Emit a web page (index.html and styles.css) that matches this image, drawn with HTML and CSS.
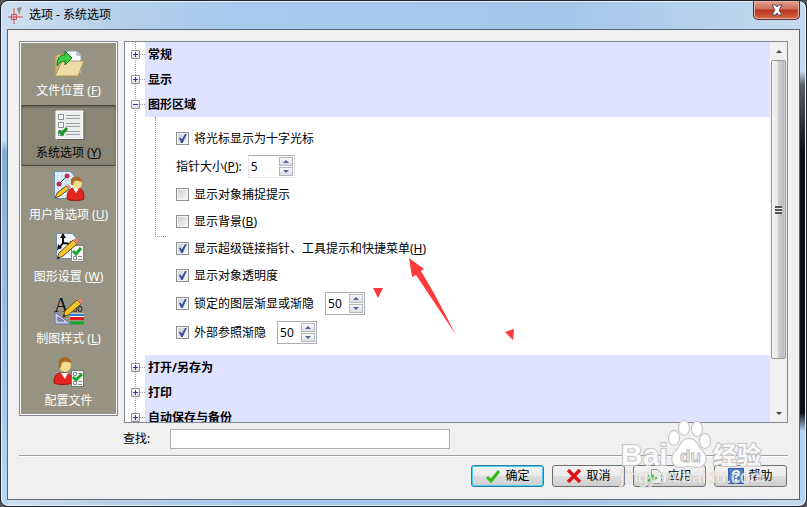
FILE: index.html
```
<!DOCTYPE html>
<html lang="zh-CN">
<head>
  <meta charset="UTF-8" />
  <title>选项 - 系统选项</title>
  <link rel="stylesheet" href="styles.css">
</head>
<body>
  <div class="window">
    <header class="titlebar">
      <svg class="app-icon" width="16" height="18" viewBox="0 0 16 18">
        <circle cx="9" cy="8" r="7" fill="#d9dde2"/>
        <path d="M9 2l5-1-3 8z" fill="#8c8f94"/>
        <path d="M6 2v16M0 11h15M3.500 8.500h5v5h-5z" stroke="#c8505a" fill="none"/>
      </svg>
      <h1>选项 - 系统选项</h1>
      <button class="close" aria-label="关闭">
        <svg width="14" height="12" viewBox="0 0 14 12">
          <path d="M2 1h3.500L7 3l1.500-2H12L9 6l3 5H8.500L7 9l-1.500 2H2l3-5z" fill="#fff" stroke="#5a4a55"/>
        </svg>
      </button>
    </header>

    <main class="client">
      <div class="panes">
        <nav class="sidebar">
          <button>
            <svg width="32" height="30" viewBox="0 0 32 30">
              <path d="M2 8l3-2h6l2 2h14v20H2z" fill="#cdb67e" stroke="#a58d50"/>
              <path d="M14 3h10l4 4v18H14z" fill="#f8fbff" stroke="#8c9bb0"/>
              <path d="M24 3v4h4" fill="#c9d5e6" stroke="#8c9bb0"/>
              <path d="M2 28L9 13h22l-6 15z" fill="#ecdca6" stroke="#ad945a"/>
              <path d="M4 18c0-8 3-11 8-11V3l7 7-7 7v-4c-4 0-6 2-8 5z" fill="#3ccf45" stroke="#137c1c"/>
            </svg>
            <span>文件位置 (<u>F</u>)</span>
          </button>
          <button class="selected">
            <svg width="32" height="30" viewBox="0 0 32 30">
              <path d="M3 1h27v28H3z" fill="#eef0f0" stroke="#fff"/>
              <path d="M31 2v27.500H4" fill="none" stroke="#62665e"/>
              <path d="M5.500 4.500h5v5h-5zM5.500 12.500h5v5h-5zM5.500 20.500h5v5h-5z" fill="#fff" stroke="#8a8f92"/>
              <path d="M13 5.500h14M13 8.500h14M13 13.500h14M13 16.500h14M13 21.500h14M13 24.500h14" stroke="#9a9fa3"/>
              <path d="M6 21l3 3 5-6" fill="none" stroke="#169826" stroke-width="3"/>
            </svg>
            <span>系统选项 (<u>Y</u>)</span>
          </button>
          <button>
            <svg width="32" height="32" viewBox="0 0 32 32">
              <path d="M1.500 1.500h16l4 5v22h-20z" fill="#eaf6ff" stroke="#6c91b4"/>
              <path d="M5 2v26M9 2v26M13 2v26M17 2v26M2 6h18M2 10h18M2 14h18M2 18h18M2 22h18" stroke="#a9d3ea" stroke-width=".7"/>
              <path d="M6 14l8-8" stroke="#333"/>
              <circle cx="6" cy="14" r="2.500" fill="#b82d50"/>
              <circle cx="14" cy="6" r="2.500" fill="#b82d50"/>
              <path d="M2 28l2-5 9-7 3 3-9 7z" fill="#f4c62f" stroke="#6b4a12"/>
              <path d="M13 16l3 3 2-2-3-3z" fill="#ef8c8c"/>
              <path d="M14 29c0-9 3-11 9-11s8 3 8 11c-4 2-13 2-17 0z" fill="#e3241f" stroke="#9b1712"/>
              <path d="M20 18l3 5 3-5z" fill="#fff"/>
              <ellipse cx="24" cy="13" rx="5" ry="6" fill="#f1dc8e"/>
              <path d="M18 14c-1-6 2-8 6-7 4 0 5 2 5 5-4-1-7-2-8 0s-1 5-3 2z" fill="#a96a25"/>
            </svg>
            <span>用户首选项 (<u>U</u>)</span>
          </button>
          <button>
            <svg width="32" height="32" viewBox="0 0 32 32">
              <path d="M3.500 1.500h16l4 5v20h-20z" fill="#f0f5fb" stroke="#7690ad"/>
              <path d="M10 12V4M10 11l9 1M10 11l-4 5" stroke="#111" stroke-width="2" fill="none"/>
              <path d="M10 1l3 5H7zM22 12l-5-3v6zM4 18l1-6 4 4z" fill="#111"/>
              <path d="M18.500 13.500h12v16h-12z" fill="#f4f4f4" stroke="#82867e"/>
              <path d="M20.500 24.500h3v3h-3zM25 24.500h4M25 27.500h4" stroke="#8a8f92" fill="none"/>
              <path d="M20 19l3 3 5-6" stroke="#1aa42c" stroke-width="3" fill="none"/>
              <path d="M4 27l2-6L20 8l4 4-14 12z" fill="#f4c62f" stroke="#6b4a12"/>
              <path d="M4 27l1-3 2 2z" fill="#222"/>
              <path d="M20 8l4 4 2-3-3-3z" fill="#e77f7b"/>
            </svg>
            <span>图形设置 (<u>W</u>)</span>
          </button>
          <button>
            <svg width="32" height="30" viewBox="0 0 32 30">
              <text x="1" y="16" class="glyph-a">A</text>
              <text x="17" y="16" class="glyph-num">.00</text>
              <path d="M17 20h14" stroke="#fff" stroke-width="5"/>
              <path d="M17 19h14" stroke="#3478d6" stroke-width="2"/>
              <path d="M17 22.500h14" stroke="#e02020" stroke-width="3"/>
              <path d="M17 27h14" stroke="#13a42a" stroke-width="3"/>
              <path d="M2 16v12h16zM5 21l6 4H5z" fill="#c6c9e9" fill-rule="evenodd" stroke="#6d70a0"/>
              <path d="M10 21l2-6L24 4l4 4-13 11z" fill="#f4c62f" stroke="#6b4a12"/>
              <path d="M24 4l4 4 2-3-3-3z" fill="#e77f7b"/>
              <path d="M10 21l1-3 2 2z" fill="#222"/>
            </svg>
            <span>制图样式 (<u>L</u>)</span>
          </button>
          <button>
            <svg width="32" height="32" viewBox="0 0 32 32">
              <path d="M1 27c0-8 3-10 9-10s9 2 9 10c-4 2-14 2-18 0z" fill="#e3241f" stroke="#9b1712"/>
              <path d="M8 17l4 6 3-6z" fill="#fff"/>
              <ellipse cx="12" cy="9" rx="6" ry="7" fill="#f1dc8e"/>
              <path d="M6 12C4 4 8 1 13 1c4 1 6 3 5 6-4-1-7-2-9 0-1 2-1 6-3 5z" fill="#a96a25"/>
              <path d="M18.500 14.500h12v16h-12z" fill="#f4f4f4" stroke="#72766e"/>
              <path d="M20.500 16.500h3v3h-3zM20.500 25.500h3v3h-3zM25 25.500h4M25 28.500h4M25 17.500h4" stroke="#8a8f92" fill="none"/>
              <path d="M20 21l3 3 6-6" stroke="#1aa42c" stroke-width="3" fill="none"/>
            </svg>
            <span>配置文件</span>
          </button>
        </nav>

        <section class="tree">
          <div class="tree-view">
            <div class="group"><button class="toggle" aria-label="展开"></button><h2>常规</h2></div>
            <div class="group"><button class="toggle" aria-label="展开"></button><h2>显示</h2></div>
            <div class="group"><button class="toggle open" aria-label="折叠"></button><h2>图形区域</h2></div>
            <div class="options">
              <div class="option"><label><input type="checkbox" checked>将光标显示为十字光标</label></div>
              <div class="option spin-row">
                <label for="cursorSize">指针大小(<u>P</u>):</label>
                <span class="spinner wide soft">
                  <input type="text" id="cursorSize" value="5">
                  <span class="arrows"><button class="up" aria-label="增加"></button><button class="down" aria-label="减少"></button></span>
                </span>
              </div>
              <div class="option"><label><input type="checkbox">显示对象捕捉提示</label></div>
              <div class="option"><label><input type="checkbox">显示背景(<u>B</u>)</label></div>
              <div class="option"><label><input type="checkbox" checked>显示超级链接指针、工具提示和快捷菜单(<u>H</u>)</label></div>
              <div class="option"><label><input type="checkbox" checked>显示对象透明度</label></div>
              <div class="option spin-row fade">
                <label><input type="checkbox" checked>锁定的图层渐显或渐隐</label>
                <span class="spinner">
                  <input type="text" value="50" aria-label="锁定的图层渐显或渐隐">
                  <span class="arrows"><button class="up" aria-label="增加"></button><button class="down" aria-label="减少"></button></span>
                </span>
              </div>
              <div class="option spin-row fade">
                <label><input type="checkbox" checked>外部参照渐隐</label>
                <span class="spinner">
                  <input type="text" value="50" aria-label="外部参照渐隐">
                  <span class="arrows"><button class="up" aria-label="增加"></button><button class="down" aria-label="减少"></button></span>
                </span>
              </div>
            </div>
            <div class="group"><button class="toggle" aria-label="展开"></button><h2>打开/另存为</h2></div>
            <div class="group"><button class="toggle" aria-label="展开"></button><h2>打印</h2></div>
            <div class="group"><button class="toggle" aria-label="展开"></button><h2>自动保存与备份</h2></div>
          </div>
          <div class="scrollbar">
            <button class="scroll-btn up" aria-label="向上"></button>
            <div class="track"><div class="thumb"><i></i></div></div>
            <button class="scroll-btn down" aria-label="向下"></button>
          </div>
        </section>
      </div>

      <div class="search">
        <label for="search">查找:</label>
        <input type="text" id="search">
      </div>

      <footer class="actions">
        <button class="default">
          <svg width="16" height="16" viewBox="0 0 16 16"><path d="M2 9l4 4 8-10" fill="none" stroke="#2fbd16" stroke-width="3"/></svg>
          确定
        </button>
        <button>
          <svg width="16" height="16" viewBox="0 0 16 16"><path d="M2 2l12 12M14 2L2 14" stroke="#e0131b" stroke-width="3.500"/></svg>
          取消
        </button>
        <button>
          <svg width="16" height="16" viewBox="0 0 16 16">
            <path d="M4.500 1.500h6l4 4v10h-10z" fill="#f1f1f1" stroke="#999"/>
            <path d="M1 7l4 3-4 3M5 7l4 3-4 3" fill="none" stroke="#37b032" stroke-width="2"/>
          </svg>
          应用
        </button>
        <button>
          <svg width="16" height="16" viewBox="0 0 16 16">
            <rect x=".5" y=".5" width="15" height="15" fill="#4c7fc4" stroke="#36609b"/>
            <path d="M5 6c0-4 6-4 6-1 0 2-3 2-3 5M8 11v2" fill="none" stroke="#fff" stroke-width="2"/>
          </svg>
          帮助
        </button>
      </footer>
    </main>

    <svg class="marks" width="160" height="95" viewBox="0 0 160 95">
      <path d="M37 8l15 11-3 2 14 24 21 40-26-39-14-21-4 2z" fill="#ff3b3b"/>
      <path d="M1 38h10l-5 10zM133 82l9-3-1 11z" fill="#ff3b3b"/>
    </svg>

    <svg class="watermark" width="150" height="70" viewBox="0 0 150 70">
      <g class="logo">
        <ellipse cx="54" cy="18" rx="5" ry="7"/>
        <ellipse cx="64" cy="8" rx="5" ry="7"/>
        <ellipse cx="77" cy="9" rx="5" ry="7"/>
        <ellipse cx="85" cy="21" rx="5" ry="7"/>
        <path d="M69 19c8 0 8 7 13 12 7 7 3 16-4 16-4 0-5-1-9-1s-5 1-9 1c-7 0-11-9-4-16 5-5 5-12 13-12z"/>
        <text x="1" y="45" class="brand">Bai</text>
        <text x="93" y="44" class="brand-cn">经验</text>
      </g>
      <text x="60" y="42" class="brand-du">du</text>
      <text x="0" y="63" class="brand-url">jingyan.baidu.com</text>
    </svg>
  </div>
</body>
</html>
```

FILE: styles.css
```
* {
  box-sizing: border-box;
}

body {
  margin: 0;
  background: #555;
  font-family: "Noto Sans", "Noto Sans CJK SC", sans-serif;
  font-size: 12px;
  line-height: 16px;
  color: #000;
}

button, input {
  font: inherit;
  color: inherit;
  margin: 0;
  padding: 0;
}

.window {
  position: relative;
  display: flex;
  flex-direction: column;
  height: 100vh;
  padding: 0 6px 6px;
  border: 1px solid #20242c;
  border-radius: 8px;
  box-shadow: inset 0 0 0 1px #e6f2fd;
  background:
    linear-gradient(#c4daf0 70px, #5c6066 84px, #0c0f14 150px, #0c0f14 412px, #b4d4f4 430px) right / 7px 100% no-repeat,
    linear-gradient(#c9def2 140px, #86aed6 150px, #a5c8ea 400px, #b9d9f8) left / 7px 100% no-repeat,
    linear-gradient(90deg, #cfdfef, #b5cfea 15%, #a6caee 30%, #a3c6e9 70%, #c4daf0);
}

.titlebar {
  display: flex;
  align-items: center;
  height: 28px;
  padding-left: 1px;
}

.titlebar h1 {
  flex: 1;
  margin: 0 0 0 5px;
  font-size: 12px;
  font-weight: normal;
}

.close {
  display: grid;
  place-items: center;
  align-self: flex-start;
  width: 47px;
  height: 19px;
  border: 1px solid #5a2525;
  border-top: 0;
  border-radius: 0 0 5px 5px;
  box-shadow: inset 0 0 0 1px #eab0a4;
  background: linear-gradient(#e2a193, #cf6a58 45%, #b9331f 50%, #d5684b);
}

.client {
  flex: 1;
  display: flex;
  flex-direction: column;
  min-height: 0;
  padding: 11px 11px 12px;
  border: 1px solid #5a6470;
  background: #f0f0f0;
}

.panes {
  flex: 1;
  display: flex;
  align-items: flex-start;
  gap: 6px;
  min-height: 0;
}

.sidebar {
  display: flex;
  flex-direction: column;
  gap: 1px;
  width: 99px;
  border: 1px solid #83868c;
  outline: 1px solid #fff;
  outline-offset: -2px;
  padding: 1px 0;
  background: #979382;
}

.sidebar button {
  display: flex;
  flex-direction: column;
  align-items: center;
  justify-content: flex-end;
  gap: 5px;
  height: 61px;
  padding-bottom: 4px;
  border: 1px solid transparent;
  border-radius: 3px;
  background: none;
  color: #fff;
}

.sidebar .selected {
  border-color: #45443c;
  background: #8a8675;
  box-shadow: inset 0 1px 3px #5f5c50;
  color: #000;
}

.glyph-a {
  font-family: "Liberation Serif", serif;
  font-size: 20px;
  fill: #111;
}

.glyph-num {
  font-family: "Liberation Sans", sans-serif;
  font-size: 9px;
  fill: #111;
}

.tree {
  flex: 1;
  align-self: stretch;
  display: flex;
  border: 1px solid #828790;
  background: #fff;
}

.tree-view {
  flex: 1;
  overflow: hidden;
  background: linear-gradient(#999 50%, transparent 50%) 10px 0 / 1px 2px repeat-y;
}

.group {
  display: flex;
  align-items: center;
  height: 25px;
  padding-left: 6px;
}

.group::after {
  content: "";
  order: 1;
  width: 5px;
  border-top: 1px dotted #999;
}

.group h2 {
  order: 2;
  flex: 1;
  margin: 0;
  padding-left: 3px;
  background: #dfe3ff;
  font-size: 12px;
  font-weight: bold;
  line-height: 25px;
}

.toggle {
  width: 9px;
  height: 9px;
  border: 1px solid #919191;
  border-radius: 1px;
  background:
    linear-gradient(#27408b, #27408b) center / 5px 1px no-repeat,
    linear-gradient(#27408b, #27408b) center / 1px 5px no-repeat,
    linear-gradient(#fff, #ddd);
}

.toggle.open {
  background:
    linear-gradient(#27408b, #27408b) center / 5px 1px no-repeat,
    linear-gradient(#fff, #ddd);
}

.options {
  position: relative;
  padding: 8px 0 8px 51px;
}

.options::before {
  content: "";
  position: absolute;
  left: 30px;
  top: 0;
  width: 10px;
  height: 50%;
  border: dotted #999;
  border-width: 0 0 1px 1px;
}

.option {
  display: flex;
  align-items: center;
  height: 27px;
}

.option label {
  display: flex;
  align-items: center;
  white-space: pre;
}

.spin-row {
  gap: 6px;
  height: 29px;
}

.fade {
  gap: 11px;
}

input[type="checkbox"] {
  appearance: none;
  width: 13px;
  height: 13px;
  margin-right: 5px;
  border: 1px solid #8e8f8f;
  background: linear-gradient(135deg, #cdd1d6, #f6f6f6) content-box, #f4f4f4;
  padding: 1px;
}

input[type="checkbox"]:checked::before {
  content: "";
  display: block;
  width: 9px;
  height: 9px;
  background: #3a539b;
  clip-path: polygon(10% 45%, 28% 40%, 42% 62%, 78% 0, 98% 0, 52% 100%, 34% 100%);
}

.spinner {
  display: flex;
  align-items: center;
  width: 40px;
  height: 23px;
  padding: 1px;
  border: 1px solid #abadb3;
  background: #fff;
}

.spinner.wide {
  width: 47px;
}

.spinner.soft {
  border-color: #abadb3 #e2e3ea #e3e9ef;
}

.spinner input {
  flex: 1;
  min-width: 0;
  border: 0;
  padding-left: 1px;
  background: none;
}

.arrows {
  display: flex;
  flex-direction: column;
  gap: 1px;
}

.arrows button {
  display: grid;
  place-items: center;
  width: 14px;
  height: 9px;
  border: 1px solid #b4b6bb;
  background: linear-gradient(#fafafa, #dcdde2);
}

.up::before,
.down::before {
  content: "";
  border: 3px solid transparent;
}

.up::before {
  border-top: 0;
  border-bottom-color: #4d62a3;
}

.down::before {
  border-bottom: 0;
  border-top-color: #4d62a3;
}

.scrollbar {
  display: flex;
  flex-direction: column;
  width: 17px;
  background: #f0f0f0;
}

.scroll-btn {
  display: grid;
  place-items: center;
  height: 18px;
  border: 0;
  background: none;
}

.scroll-btn.up::before {
  border-bottom-color: #444;
}

.scroll-btn.down::before {
  border-top-color: #444;
}

.track {
  flex: 1;
}

.thumb {
  display: grid;
  place-items: center;
  width: 15px;
  height: 87%;
  margin: 0 1px;
  border: 1px solid #979797;
  border-radius: 2px;
  background: linear-gradient(90deg, #f5f5f5, #e6e6e8 45%, #cfcfd2 50%, #bcbcc0 90%, #dcdcdc);
}

.thumb i {
  width: 7px;
  height: 8px;
  background: repeating-linear-gradient(#555 0 2px, #eee 2px 3px);
}

.search {
  display: flex;
  align-items: center;
  height: 32px;
  padding-left: 104px;
}

.search label {
  width: 47px;
}

.search input {
  width: 280px;
  height: 20px;
  border: 1px solid #abadb3;
  background: #fff;
}

.actions {
  display: flex;
  justify-content: flex-end;
  gap: 8px;
  padding: 9px 1px 0 0;
  border-top: 1px solid #a0a0a0;
  box-shadow: inset 0 1px #fff;
}

.actions button {
  display: flex;
  align-items: center;
  justify-content: center;
  gap: 4px;
  width: 73px;
  height: 22px;
  border: 1px solid #707070;
  border-radius: 3px;
  background: linear-gradient(#f3f3f3, #ebebeb 48%, #dcdcdc 52%, #cfcfcf);
}

.actions .default {
  border-color: #2c7f9f;
  box-shadow: inset 0 0 0 1px #48cdf3;
}

.marks {
  position: absolute;
  left: 371px;
  top: 249px;
}

.watermark {
  position: absolute;
  right: 36px;
  bottom: 16px;
  overflow: visible;
  pointer-events: none;
}

.logo {
  fill: #fff;
  fill-opacity: .9;
  stroke: #c4c4c4;
  stroke-width: 2px;
  paint-order: stroke;
}

.brand,
.brand-du,
.brand-url {
  font-family: "Liberation Sans", sans-serif;
}

.brand {
  font-size: 30px;
  font-weight: bold;
}

.brand-cn {
  font-family: "Noto Sans CJK SC", sans-serif;
  font-size: 24px;
  font-weight: bold;
}

.brand-du {
  font-size: 17px;
  font-weight: bold;
  fill: #eee;
  stroke: #bbb;
  stroke-width: 1px;
}

.brand-url {
  font-size: 18px;
  fill: #fff;
  fill-opacity: .7;
  stroke: #bbb;
  stroke-opacity: .6;
  stroke-width: 1px;
  paint-order: stroke;
}
```
